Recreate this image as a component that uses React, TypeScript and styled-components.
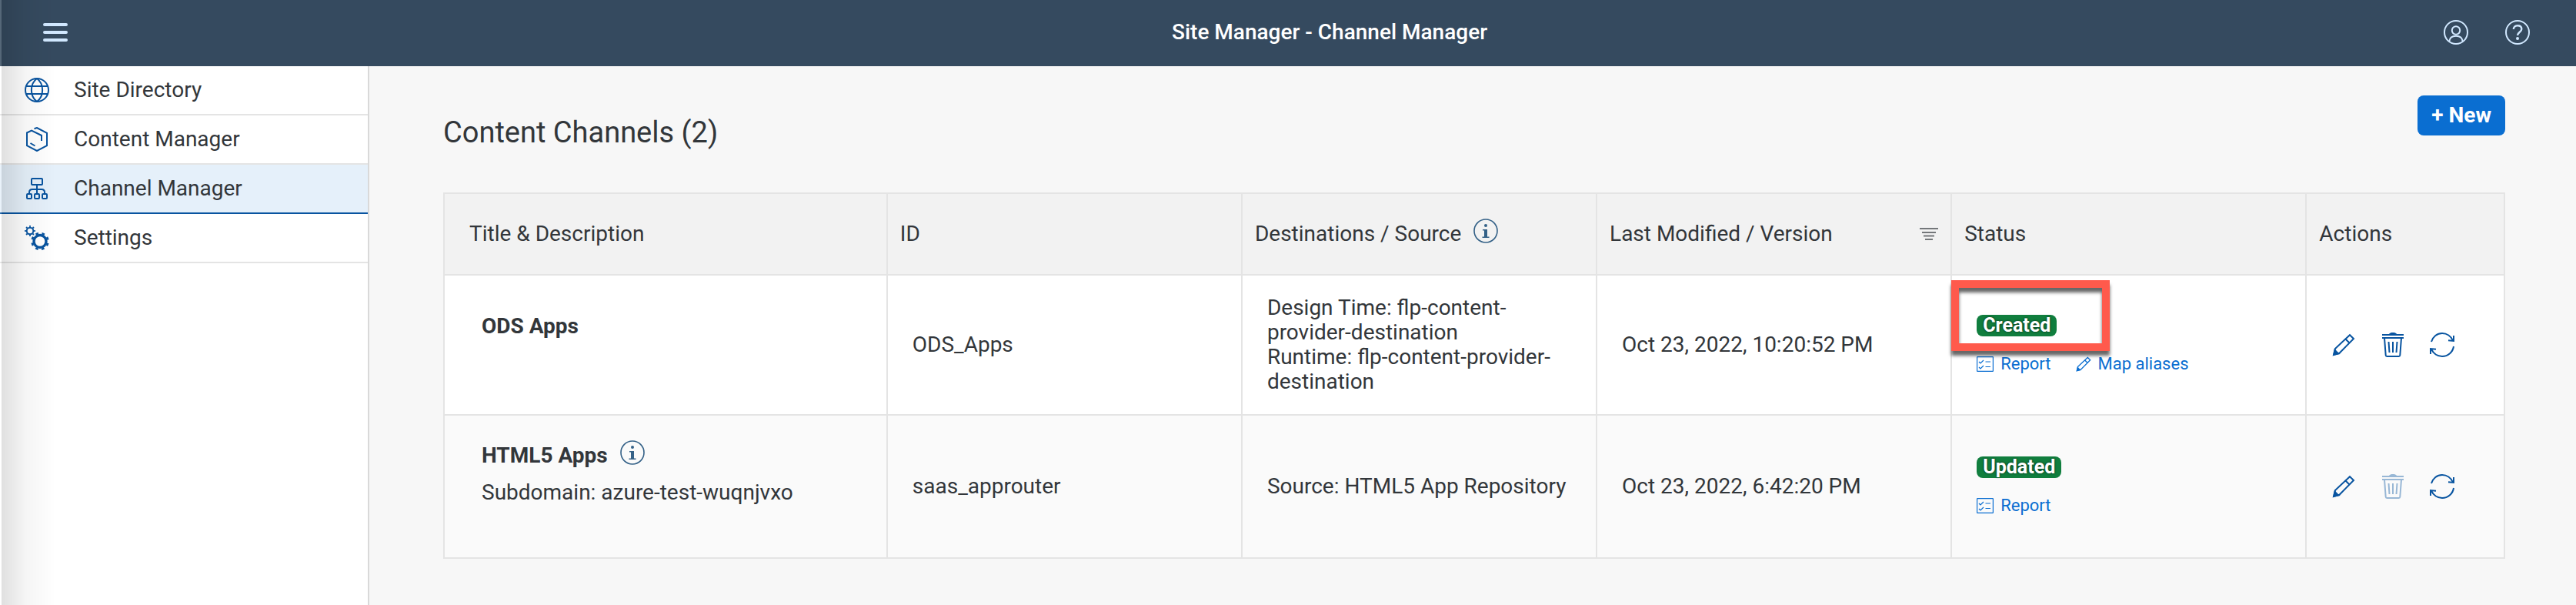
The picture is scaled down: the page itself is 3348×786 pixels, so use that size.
import React from "react";
import styled, { createGlobalStyle, css } from "styled-components";

const color = {
  shell: "#354a5f",
  shellIcon: "#d1e8ff",
  text: "#32363a",
  icon: "#0854a0",
  link: "#0a6ed1",
  info: "#346187",
  line: "#e4e4e4",
  page: "#f7f7f7",
  positive: "#107e3e",
  callout: "#ff5a4c",
};

const GlobalStyle = createGlobalStyle`
  *, *::before, *::after { box-sizing: border-box; }
  body {
    margin: 0;
    background: ${color.page};
    color: ${color.text};
    font-family: Roboto, "Liberation Sans", sans-serif;
    font-size: 28px;
    line-height: 32px;
  }
  button {
    font: inherit;
    color: inherit;
    background: none;
    border: 0;
    padding: 0;
    cursor: pointer;
  }
  svg { display: block; flex: none; }
`;

/* ---------- layout ---------- */

const Page = styled.div`
  position: relative;
  display: flex;
  flex-direction: column;
  min-height: 100vh;
`;

const EdgeShade = styled.div`
  position: absolute;
  inset: 0 auto 0 0;
  width: 72px;
  border-left: 2px solid rgba(255, 255, 255, 0.16);
  background: linear-gradient(to right, rgba(0, 0, 0, 0.12), rgba(0, 0, 0, 0.04) 45%, transparent);
  pointer-events: none;
`;

const ShellBar = styled.header`
  display: grid;
  grid-template-columns: 296px 1fr 188px;
  align-items: center;
  height: 86px;
  padding-bottom: 2px;
  background: ${color.shell};
  color: ${color.shellIcon};
`;

const MenuButton = styled.button`
  justify-self: start;
  margin-left: 56px;
`;

const ShellTitle = styled.h1`
  margin: 0;
  font-size: 28px;
  line-height: 32px;
  font-weight: 500;
  text-align: center;
  color: #fff;
`;

const ShellActions = styled.div`
  display: flex;
  gap: 48px;
  padding-left: 16px;
`;

const Body = styled.div`
  display: flex;
  flex: 1;
`;

const Sidebar = styled.nav`
  flex: 0 0 480px;
  background: #fff;
  border-right: 2px solid #d9d9d9;
`;

const NavItem = styled.a<{ $active?: boolean }>`
  display: flex;
  align-items: center;
  gap: 32px;
  height: 64px;
  padding-left: 32px;
  border-bottom: 2px solid ${color.line};
  color: ${color.text};
  text-decoration: none;
  svg { color: ${color.icon}; }
  ${(p) =>
    p.$active &&
    css`
      background: #e5f0fa;
      border-bottom-color: ${color.icon};
    `}
`;

const Main = styled.main`
  flex: 1;
  min-width: 0;
  padding: 38px 92px 60px 96px;
`;

const Toolbar = styled.div`
  display: flex;
  justify-content: space-between;
  align-items: flex-start;
`;

const Heading = styled.h2`
  margin: 0;
  padding: 24px 0 54px;
  font-size: 38px;
  line-height: 48px;
  font-weight: 400;
`;

const NewButton = styled.button`
  height: 52px;
  padding: 0 18px;
  border-radius: 8px;
  background: ${color.link};
  color: #fff;
  font-weight: 700;
`;

/* ---------- table ---------- */

const Table = styled.table`
  width: 100%;
  table-layout: fixed;
  border-collapse: separate;
  border-spacing: 0;
  border: solid ${color.line};
  border-width: 2px 0 0 2px;
`;

const Col = styled.col<{ $width?: string }>`
  width: ${(p) => p.$width ?? "auto"};
`;

const cell = css`
  border: solid ${color.line};
  border-width: 0 2px 2px 0;
  text-align: left;
  vertical-align: middle;
`;

const HeadCell = styled.th<{ $first?: boolean }>`
  ${cell}
  height: 106px;
  padding: 0 16px 0 ${(p) => (p.$first ? 32 : 16)}px;
  background: #f2f2f2;
  font-weight: 400;
`;

const HeadContent = styled.div`
  display: flex;
  align-items: center;
  justify-content: space-between;
`;

const Row = styled.tr<{ $alt?: boolean }>`
  background: ${(p) => (p.$alt ? "#fafafa" : "#fff")};
`;

const Cell = styled.td`
  ${cell}
  padding: 26px 32px;
`;

const TitleCell = styled(Cell)`
  padding: 36px 48px;
`;

const ActionsCell = styled(Cell)`
  padding: 0 16px;
`;

const WithInfo = styled.div`
  display: flex;
  align-items: center;
  gap: 16px;
`;

const InfoButton = styled.button`
  color: ${color.info};
  margin: -4px 0 4px;
`;

const ChannelName = styled(WithInfo)`
  height: 32px;
  margin-bottom: 16px;
  font-weight: 700;
`;

const DescriptionLine = styled.div`
  min-height: 32px;
`;

const SortButton = styled.button`
  color: #74777a;
`;

const Status = styled.div`
  position: relative;
  display: flex;
  flex-direction: column;
  align-items: flex-start;
  gap: 22px;
  font-size: 22px;
  line-height: 28px;
`;

const Badge = styled.span`
  padding: 0 8px;
  border-radius: 8px;
  background: ${color.positive};
  color: #fff;
  font-size: 25px;
  font-weight: 700;
  text-shadow: 0 0 3px rgba(0, 0, 0, 0.7);
`;

const Callout = styled.div`
  position: absolute;
  top: -45px;
  left: -33px;
  width: 206px;
  height: 92px;
  border: 10px solid ${color.callout};
  filter: drop-shadow(0 6px 2px rgba(0, 0, 0, 0.6));
  pointer-events: none;
`;

const Links = styled.div`
  display: flex;
  gap: 32px;
`;

const StatusLink = styled.a`
  display: flex;
  align-items: center;
  gap: 9px;
  color: ${color.link};
  text-decoration: none;
  white-space: nowrap;
`;

const Actions = styled.div`
  display: flex;
`;

const ActionButton = styled.button`
  display: flex;
  flex: 0 0 64px;
  justify-content: center;
  color: ${color.icon};
  &:disabled {
    opacity: 0.4;
    cursor: default;
  }
`;

/* ---------- icons ---------- */

type IconProps = { children: React.ReactNode; size?: number; width?: number; box?: string; stroke?: number };

const Icon = ({ children, size = 32, width = size, box = "0 0 32 32", stroke = 2 }: IconProps) => (
  <svg
    width={width}
    height={size}
    viewBox={box}
    fill="none"
    stroke="currentColor"
    strokeWidth={stroke}
    aria-hidden="true"
  >
    {children}
  </svg>
);

const MenuIcon = () => (
  <Icon stroke={4}>
    <path d="M2 6h28M2 16h28M2 26h28" strokeLinecap="round" />
  </Icon>
);

const UserIcon = () => (
  <Icon>
    <circle cx="16" cy="16" r="15" />
    <circle cx="16" cy="13.5" r="5.2" />
    <path d="M7.3 28c.4-4.900 3.200-7.300 8.700-7.300s8.300 2.400 8.700 7.300" />
  </Icon>
);

const HelpIcon = () => (
  <Icon>
    <circle cx="16" cy="16" r="15" />
    <path d="M10.800 12C10.800 9 12.800 7.300 16 7.300s5.300 1.800 5.300 4.500c0 3.900-5.300 4-5.300 8.200" strokeWidth="2.400" />
    <circle cx="16" cy="24" r="2" fill="currentColor" stroke="none" />
  </Icon>
);

const GlobeIcon = () => (
  <Icon>
    <circle cx="16" cy="16" r="15" />
    <path d="M16 1C6.500 8 6.500 24 16 31M16 1c9.500 7 9.500 23 0 30M2 11h28M2 21h28" />
  </Icon>
);

const ContentIcon = () => (
  <Icon>
    <path d="M12.500 2.300 16 1l13 6.800v16.400L16 31 3 24.200V7.500l6-2.800L22 11v7M7.500 21l6 3.500" />
  </Icon>
);

const ChannelIcon = () => (
  <Icon>
    <rect x="9" y="3" width="14" height="8" rx="1" />
    <path d="M16 11v11M6 22v-1c0-2.500 1.500-4 4-4h12c2.500 0 4 1.500 4 4v1" />
    <rect x="3" y="23" width="6" height="6" rx="1" />
    <rect x="13" y="23" width="6" height="6" rx="1" />
    <rect x="23" y="23" width="6" height="6" rx="1" />
  </Icon>
);

const SettingsIcon = () => (
  <Icon>
    <circle cx="7" cy="7" r="4.300" />
    <circle cx="7" cy="7" r="6" pathLength="16" strokeDasharray="0.800 1.200" strokeDashoffset="0.400" />
    <circle cx="20" cy="20.500" r="8" strokeWidth="3.400" />
    <circle cx="20" cy="20.500" r="10.500" strokeWidth="2.600" pathLength="16" strokeDasharray="0.900 1.100" strokeDashoffset="-0.600" />
  </Icon>
);

const InfoIcon = () => (
  <Icon stroke={1.6}>
    <circle cx="16" cy="16" r="15" />
    <circle cx="16" cy="9" r="2" fill="currentColor" stroke="none" />
    <path d="M12 14h6v9.500h2.500V25h-9v-1.500H14V15.500h-2z" fill="currentColor" stroke="none" />
  </Icon>
);

const SortIcon = () => (
  <Icon size={16} width={24} box="0 0 24 16">
    <path d="M0 1h24M3 6h18M5 10.500h14M7 15h10" strokeWidth="1.800" />
  </Icon>
);

const EditIcon = ({ size = 32, tight }: { size?: number; tight?: boolean }) => (
  <Icon size={size} box={tight ? "1 1 30 30" : undefined}>
    <path d="M3 29 5 21 24 3.200 29 8 10.500 26.800zM18.500 8.500l5 5" />
    <path d="M2 30 4 20.500l3.500 4 4 3.500z" fill="currentColor" stroke="none" />
  </Icon>
);

const DeleteIcon = () => (
  <Icon>
    <path d="M2 3h28M2 7h28M5 7l1.700 22.500c.1 1 .6 1.500 1.500 1.500h15.600c.9 0 1.400-.500 1.500-1.500L27 7M10.500 12l1 14M16 12v14M21.500 12l-1 14" />
    <path d="M10.500 2.500C12 .5 13.500 0 16 0s4 .5 5.500 2.500z" fill="currentColor" stroke="none" />
  </Icon>
);

const RefreshIcon = () => (
  <Icon>
    <path d="M2 12C4 5.500 9.500 1 16 1c6 0 11.500 3.800 14 9.500M31 18c-1 7.300-7.300 13-15 13-6 0-11.500-3.800-14-9.500" />
    <path d="M31 4v7l-7-.8M1 28v-7l7 .8" />
  </Icon>
);

const ReportIcon = () => (
  <Icon size={20} width={22} box="0 0 22 20" stroke={1.2}>
    <rect x="0.600" y="0.600" width="20.800" height="18.800" rx="0.500" />
    <path d="M3 7l2 2 4-4M3 14l2 2 4-4M11.500 7H18M11.500 13.500H18" />
  </Icon>
);

/* ---------- content ---------- */

const navigation = [
  { label: "Site Directory", icon: <GlobeIcon /> },
  { label: "Content Manager", icon: <ContentIcon /> },
  { label: "Channel Manager", icon: <ChannelIcon />, active: true },
  { label: "Settings", icon: <SettingsIcon /> },
];

type Channel = {
  name: string;
  info?: boolean;
  description: string[];
  id: string;
  sources: string[];
  modified: string;
  status: string;
  highlighted?: boolean;
  aliases?: boolean;
  deletable: boolean;
};

const channels: Channel[] = [
  {
    name: "ODS Apps",
    description: [""],
    id: "ODS_Apps",
    sources: ["Design Time: flp-content-provider-destination", "Runtime: flp-content-provider-destination"],
    modified: "Oct 23, 2022, 10:20:52 PM",
    status: "Created",
    highlighted: true,
    aliases: true,
    deletable: true,
  },
  {
    name: "HTML5 Apps",
    info: true,
    description: ["Subdomain: azure-test-wuqnjvxo", ""],
    id: "saas_approuter",
    sources: ["Source: HTML5 App Repository"],
    modified: "Oct 23, 2022, 6:42:20 PM",
    status: "Updated",
    deletable: false,
  },
];

const ChannelRow = ({ channel, alt }: { channel: Channel; alt: boolean }) => (
  <Row $alt={alt}>
    <TitleCell>
      <ChannelName>
        {channel.name}
        {channel.info && (
          <InfoButton type="button" aria-label="About this channel">
            <InfoIcon />
          </InfoButton>
        )}
      </ChannelName>
      {channel.description.map((line, i) => (
        <DescriptionLine key={i}>{line}</DescriptionLine>
      ))}
    </TitleCell>
    <Cell>{channel.id}</Cell>
    <Cell>
      {channel.sources.map((source) => (
        <div key={source}>{source}</div>
      ))}
    </Cell>
    <Cell>{channel.modified}</Cell>
    <Cell>
      <Status>
        <Badge>{channel.status}</Badge>
        <Links>
          <StatusLink href="#report">
            <ReportIcon />
            Report
          </StatusLink>
          {channel.aliases && (
            <StatusLink href="#aliases">
              <EditIcon size={20} tight />
              Map aliases
            </StatusLink>
          )}
        </Links>
        {channel.highlighted && <Callout />}
      </Status>
    </Cell>
    <ActionsCell>
      <Actions>
        <ActionButton type="button" aria-label="Edit">
          <EditIcon />
        </ActionButton>
        <ActionButton type="button" aria-label="Delete" disabled={!channel.deletable}>
          <DeleteIcon />
        </ActionButton>
        <ActionButton type="button" aria-label="Refresh">
          <RefreshIcon />
        </ActionButton>
      </Actions>
    </ActionsCell>
  </Row>
);

export default function App() {
  return (
    <Page>
      <GlobalStyle />
      <ShellBar>
        <MenuButton type="button" aria-label="Menu">
          <MenuIcon />
        </MenuButton>
        <ShellTitle>Site Manager - Channel Manager</ShellTitle>
        <ShellActions>
          <button type="button" aria-label="User">
            <UserIcon />
          </button>
          <button type="button" aria-label="Help">
            <HelpIcon />
          </button>
        </ShellActions>
      </ShellBar>
      <Body>
        <Sidebar>
          {navigation.map((item) => (
            <NavItem key={item.label} href="#" $active={item.active}>
              {item.icon}
              {item.label}
            </NavItem>
          ))}
        </Sidebar>
        <Main>
          <Toolbar>
            <Heading>Content Channels (2)</Heading>
            <NewButton type="button">+ New</NewButton>
          </Toolbar>
          <Table>
            <colgroup>
              <Col $width="21.5%" />
              <Col $width="17.22%" />
              <Col $width="17.22%" />
              <Col $width="17.22%" />
              <Col $width="17.22%" />
              <Col />
            </colgroup>
            <thead>
              <tr>
                <HeadCell $first>Title &amp; Description</HeadCell>
                <HeadCell>ID</HeadCell>
                <HeadCell>
                  <WithInfo>
                    Destinations / Source
                    <InfoButton type="button" aria-label="About destinations">
                      <InfoIcon />
                    </InfoButton>
                  </WithInfo>
                </HeadCell>
                <HeadCell>
                  <HeadContent>
                    Last Modified / Version
                    <SortButton type="button" aria-label="Sort">
                      <SortIcon />
                    </SortButton>
                  </HeadContent>
                </HeadCell>
                <HeadCell>Status</HeadCell>
                <HeadCell>Actions</HeadCell>
              </tr>
            </thead>
            <tbody>
              {channels.map((channel, i) => (
                <ChannelRow key={channel.id} channel={channel} alt={i % 2 === 1} />
              ))}
            </tbody>
          </Table>
        </Main>
      </Body>
      <EdgeShade />
    </Page>
  );
}
